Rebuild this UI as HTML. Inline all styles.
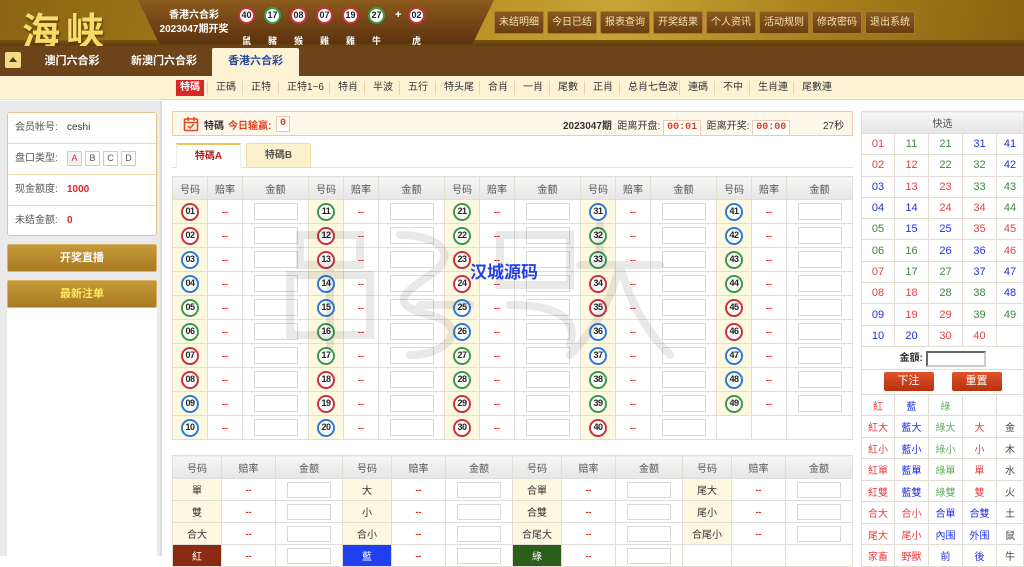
<!DOCTYPE html>
<html><head><meta charset="utf-8"><style>
*{box-sizing:border-box;margin:0;padding:0}
body{width:1024px;height:556px;overflow:hidden;font-family:"Liberation Sans","Noto Sans CJK SC",sans-serif;font-size:11px;color:#333;background:#fff;position:relative}
.abs{position:absolute}
#hd{left:0;top:0;width:1024px;height:46px;background:linear-gradient(100deg,#8a6412 0%,#b48a22 40%,#c9a336 60%,#a97f1c 80%,#8a6210 100%)}
#hd:after{content:"";position:absolute;left:0;right:0;bottom:0;height:6px;background:linear-gradient(#7a5410,#5e3e0e)}
#logo{left:22px;top:1px;font-size:38px;font-weight:bold;color:#f7dc6a;letter-spacing:6px;text-shadow:1px 2px 2px #5a3a08;font-family:"Noto Sans CJK SC",sans-serif}
#trap{left:138px;top:0;width:356px;height:44px;background:linear-gradient(#8c5a1c,#5c3210);clip-path:polygon(0 0,100% 0,94% 100%,6% 100%);}
.info{color:#fff;font-size:10px;font-weight:bold;text-align:center;line-height:14px}
.hb{display:inline-block;width:17px;height:17px;border-radius:50%;background:#fff;color:#222;font-size:9px;font-weight:bold;text-align:center;line-height:13px;border:2px solid}
.zod{color:#fff;font-size:9px;font-weight:bold;position:absolute;top:27px;width:17px;text-align:center}
#btns{left:494px;top:11px;display:flex;gap:3px}
#btns span{display:block;width:50px;text-align:center;height:23px;line-height:21px;background:linear-gradient(#8a5a1e,#6a3e12);border:1px solid #a87a32;border-radius:2px;color:#f4e2b4;font-size:10px}
#tabs{left:0;top:46px;width:1024px;height:30px;background:#6d4419}
#up{left:5px;top:52px;width:16px;height:16px;background:#f3d98a;border-radius:2px}
#up:after{content:"";position:absolute;left:4px;top:5px;border-left:4px solid transparent;border-right:4px solid transparent;border-bottom:5px solid #5a3a10}
.tab{top:46px;height:30px;line-height:30px;color:#fff;font-size:11px;font-weight:bold;text-align:center}
#sub{left:0;top:76px;width:1024px;height:24px;background:#fdf3d4;border-bottom:1px solid #e8dcb8}
.sn{position:absolute;top:81px;font-size:10px;color:#333;line-height:14px}
.sep{position:absolute;top:81px;width:1px;height:14px;background:#e0d4b4}
#left{left:0;top:101px;width:162px;height:455px;background:#eaeaea;border-right:2px solid #ddd}
#acc{left:7px;top:112px;width:150px;height:124px;background:#fff;border:1px solid #e6c98a;border-radius:3px}
.ar{position:absolute;left:0;width:148px;height:31px;border-bottom:1px solid #ecd9b0;line-height:30px;font-size:10px;color:#555;padding-left:7px}
.ar b{color:#d22;position:absolute;left:59px}
.pk{display:inline-block;width:15px;height:15px;border:1px solid #ccc;line-height:13px;text-align:center;font-size:9px;margin-right:3px;background:#fff}
.gbtn{left:7px;width:150px;height:28px;background:linear-gradient(#c59a38,#a87a22);border:1px solid #d8b466;border-radius:2px;color:#fff;font-weight:bold;text-align:center;line-height:26px;font-size:11px}
#bar{left:172px;top:111px;width:681px;height:25px;background:#fdf8ea;border:1px solid #e8cf9c}
.tm{display:inline-block;border:1px solid #f0c8b0;background:#fff;color:#d8401a;font-weight:bold;padding:0 3px;line-height:14px;font-family:"Liberation Mono",monospace;font-size:10px}
.ttab{top:143px;height:25px;line-height:24px;text-align:center;font-size:10px;font-weight:bold}
table{border-collapse:collapse;position:absolute;table-layout:fixed}
td,th{border:1px solid #e2ded6;text-align:center;font-size:10px;padding:0}
th{background:linear-gradient(#f6f6f6,#e6e6e6);color:#555;font-weight:normal}
td.n{background:#fdf8e0}
td.o{color:#e22;font-weight:bold;font-size:9px}
.in{display:inline-block;width:44px;height:17px;border:1px solid #d8d8d8;vertical-align:middle;background:#fff}
#t1 tr{height:24px}#t1 tr:first-child{height:23px}
#t2 tr{height:22px}#t2 tr:first-child{height:23px}
#t2 .in{width:44px;height:16px}
.b{display:inline-block;width:18px;height:18px;border-radius:50%;background:#fff;border:2.5px solid;font-style:normal;font-weight:bold;font-size:9px;line-height:13px;color:#222;vertical-align:middle;letter-spacing:-.5px}
.r{border-color:#c8323c}.u{border-color:#2f7ad8}.g{border-color:#3a9a4a}
#right{left:861px;top:111px;width:162px}
#q td{height:21.3px;font-size:11px;font-family:"Liberation Sans","Noto Sans CJK SC",sans-serif}
.R{color:#e84040}.U{color:#2030e0}.G{color:#3a8a3a}.K{color:#444}.L{color:#62b060}
#q2 td{height:21.5px;font-size:10px}
.rb{display:inline-block;width:50px;height:19px;line-height:19px;background:linear-gradient(#e0552c,#b8300e);color:#fff;border-radius:2px;font-size:11px}
</style></head><body>
<div id="hd" class="abs"></div>
<div id="logo" class="abs">海峡</div>
<div id="trap" class="abs"></div>
<div class="abs info" style="left:158px;top:9px;width:72px">香港六合彩<br>2023047期开奖</div>
<div class="abs" style="left:238px;top:7px;width:200px;height:36px">
<span class="hb" style="position:absolute;left:0;border-color:#c8323c">40</span>
<span class="hb" style="position:absolute;left:26px;border-color:#3a9a4a">17</span>
<span class="hb" style="position:absolute;left:52px;border-color:#c8323c">08</span>
<span class="hb" style="position:absolute;left:78px;border-color:#c8323c">07</span>
<span class="hb" style="position:absolute;left:104px;border-color:#c8323c">19</span>
<span class="hb" style="position:absolute;left:130px;border-color:#3a9a4a">27</span>
<span style="position:absolute;left:157px;top:2px;color:#fff;font-weight:bold">+</span>
<span class="hb" style="position:absolute;left:170px;border-color:#c8323c">02</span>
<span class="zod" style="left:0">鼠</span><span class="zod" style="left:26px">豬</span><span class="zod" style="left:52px">猴</span><span class="zod" style="left:78px">雞</span><span class="zod" style="left:104px">雞</span><span class="zod" style="left:130px">牛</span><span class="zod" style="left:170px">虎</span>
</div>
<div id="btns" class="abs"><span>未结明细</span><span>今日已结</span><span>报表查询</span><span>开奖结果</span><span>个人资讯</span><span>活动规则</span><span>修改密码</span><span>退出系统</span></div>
<div id="tabs" class="abs"></div>
<div id="up" class="abs"></div>
<div class="abs tab" style="left:40px;width:64px">澳门六合彩</div>
<div class="abs tab" style="left:124px;width:80px">新澳门六合彩</div>
<div class="abs tab" style="left:212px;top:48px;height:28px;line-height:26px;width:87px;background:#fdf3d4;color:#2a4a9a;border-radius:2px 2px 0 0">香港六合彩</div>
<div id="sub" class="abs"></div>
<span class="sn" style="left:176px;top:80px;background:#d8282a;color:#fff;padding:1px 4px;font-weight:bold">特碼</span>
<span class="sep" style="left:207px"></span><span class="sn" style="left:216px">正碼</span>
<span class="sep" style="left:242px"></span><span class="sn" style="left:251px">正特</span>
<span class="sep" style="left:278px"></span><span class="sn" style="left:287px">正特1~6</span>
<span class="sep" style="left:329px"></span><span class="sn" style="left:338px">特肖</span>
<span class="sep" style="left:364px"></span><span class="sn" style="left:373px">半波</span>
<span class="sep" style="left:399px"></span><span class="sn" style="left:408px">五行</span>
<span class="sep" style="left:435px"></span><span class="sn" style="left:444px">特头尾</span>
<span class="sep" style="left:479px"></span><span class="sn" style="left:488px">合肖</span>
<span class="sep" style="left:514px"></span><span class="sn" style="left:523px">一肖</span>
<span class="sep" style="left:549px"></span><span class="sn" style="left:558px">尾數</span>
<span class="sep" style="left:584px"></span><span class="sn" style="left:593px">正肖</span>
<span class="sep" style="left:619px"></span><span class="sn" style="left:628px">总肖七色波</span>
<span class="sep" style="left:679px"></span><span class="sn" style="left:688px">連碼</span>
<span class="sep" style="left:714px"></span><span class="sn" style="left:723px">不中</span>
<span class="sep" style="left:749px"></span><span class="sn" style="left:758px">生肖連</span>
<span class="sep" style="left:793px"></span><span class="sn" style="left:802px">尾數連</span>

<div id="left" class="abs"></div>
<div id="acc" class="abs">
<div class="ar" style="top:0">会员帐号:<span style="position:absolute;left:59px;color:#333">ceshi</span></div>
<div class="ar" style="top:31px">盘口类型:<span style="position:absolute;left:59px;top:0"><span class="pk" style="color:#e22;background:#eef3f8">A</span><span class="pk">B</span><span class="pk">C</span><span class="pk">D</span></span></div>
<div class="ar" style="top:62px">现金额度:<b>1000</b></div>
<div class="ar" style="top:93px;border:none">未结金额:<b>0</b></div>
</div>
<div class="abs gbtn" style="top:244px">开奖直播</div>
<div class="abs gbtn" style="top:280px;color:#ffe860">最新注单</div>
<div class="abs" style="left:7px;top:308px;width:150px;height:248px;background:#fff"></div>

<div id="bar" class="abs">
<svg class="abs" style="left:10px;top:4px" width="16" height="16" viewBox="0 0 16 16"><rect x="1.5" y="3" width="13" height="11.5" rx="1" fill="none" stroke="#e04a20" stroke-width="1.6"/><path d="M1.5 6.5h13M5 1v4M11 1v4" stroke="#e04a20" stroke-width="1.6"/><path d="M5 10l2 2 4-4" fill="none" stroke="#e04a20" stroke-width="1.5"/></svg>
<span class="abs" style="left:31px;top:5px;font-weight:bold;font-size:10px">特碼</span>
<span class="abs" style="left:55px;top:5px;font-weight:bold;color:#e04020;font-size:10px">今日输赢:</span>
<span class="abs tm" style="left:103px;top:4px">0</span>
<span class="abs" style="left:390px;top:5px;font-size:10px"><b>2023047期</b>&nbsp; 距离开盘: <span class="tm">00:01</span>&nbsp; 距离开奖: <span class="tm">00:00</span></span>
<span class="abs" style="left:650px;top:5px;font-size:10px">27秒</span>
</div>
<div class="abs" style="left:172px;top:167px;width:681px;height:1px;background:#e8e0d0"></div>
<div class="abs ttab" style="left:176px;width:65px;background:#fff;border:1px solid #eee;border-top:2px solid #f0c060;border-bottom:none;color:#b02020">特碼A</div>
<div class="abs ttab" style="left:246px;width:65px;background:#fbf1cc;border:1px solid #eedca0;color:#555">特碼B</div>

<div class="abs" style="left:470px;top:258px;font-size:17px;font-weight:bold;color:#2340e0;z-index:3">汉城源码</div>
<svg class="abs" style="left:280px;top:205px;opacity:.1;z-index:2" width="400" height="160"><g fill="none" stroke="#333" stroke-width="8" stroke-linecap="round"><path d="M20 30h60v30H20zM10 70h80v60H10zM50 60v80"/><path d="M120 30c40 0 60 20 30 40s-40 30 0 40 20 40-20 40M140 100h50"/><path d="M220 30h70v50h-70zM230 100c40 0 70 10 60 40"/><path d="M320 20v40M300 60h80M340 60c-10 40-30 70-50 90M340 60c10 40 30 70 50 90"/></g></svg>

<table id="t1" style="left:172px;top:176px;width:681px">
<colgroup><col width="35"><col width="35"><col width="66"><col width="35"><col width="35"><col width="66"><col width="35"><col width="35"><col width="66"><col width="35"><col width="35"><col width="66"><col width="35"><col width="35"><col width="66"></colgroup>
<tr><th>号码</th><th>赔率</th><th>金额</th><th>号码</th><th>赔率</th><th>金额</th><th>号码</th><th>赔率</th><th>金额</th><th>号码</th><th>赔率</th><th>金额</th><th>号码</th><th>赔率</th><th>金额</th></tr>
<tr><td class="n"><i class="b r">01</i></td><td class="o">--</td><td><span class="in"></span></td><td class="n"><i class="b g">11</i></td><td class="o">--</td><td><span class="in"></span></td><td class="n"><i class="b g">21</i></td><td class="o">--</td><td><span class="in"></span></td><td class="n"><i class="b u">31</i></td><td class="o">--</td><td><span class="in"></span></td><td class="n"><i class="b u">41</i></td><td class="o">--</td><td><span class="in"></span></td></tr>
<tr><td class="n"><i class="b r">02</i></td><td class="o">--</td><td><span class="in"></span></td><td class="n"><i class="b r">12</i></td><td class="o">--</td><td><span class="in"></span></td><td class="n"><i class="b g">22</i></td><td class="o">--</td><td><span class="in"></span></td><td class="n"><i class="b g">32</i></td><td class="o">--</td><td><span class="in"></span></td><td class="n"><i class="b u">42</i></td><td class="o">--</td><td><span class="in"></span></td></tr>
<tr><td class="n"><i class="b u">03</i></td><td class="o">--</td><td><span class="in"></span></td><td class="n"><i class="b r">13</i></td><td class="o">--</td><td><span class="in"></span></td><td class="n"><i class="b r">23</i></td><td class="o">--</td><td><span class="in"></span></td><td class="n"><i class="b g">33</i></td><td class="o">--</td><td><span class="in"></span></td><td class="n"><i class="b g">43</i></td><td class="o">--</td><td><span class="in"></span></td></tr>
<tr><td class="n"><i class="b u">04</i></td><td class="o">--</td><td><span class="in"></span></td><td class="n"><i class="b u">14</i></td><td class="o">--</td><td><span class="in"></span></td><td class="n"><i class="b r">24</i></td><td class="o">--</td><td><span class="in"></span></td><td class="n"><i class="b r">34</i></td><td class="o">--</td><td><span class="in"></span></td><td class="n"><i class="b g">44</i></td><td class="o">--</td><td><span class="in"></span></td></tr>
<tr><td class="n"><i class="b g">05</i></td><td class="o">--</td><td><span class="in"></span></td><td class="n"><i class="b u">15</i></td><td class="o">--</td><td><span class="in"></span></td><td class="n"><i class="b u">25</i></td><td class="o">--</td><td><span class="in"></span></td><td class="n"><i class="b r">35</i></td><td class="o">--</td><td><span class="in"></span></td><td class="n"><i class="b r">45</i></td><td class="o">--</td><td><span class="in"></span></td></tr>
<tr><td class="n"><i class="b g">06</i></td><td class="o">--</td><td><span class="in"></span></td><td class="n"><i class="b g">16</i></td><td class="o">--</td><td><span class="in"></span></td><td class="n"><i class="b u">26</i></td><td class="o">--</td><td><span class="in"></span></td><td class="n"><i class="b u">36</i></td><td class="o">--</td><td><span class="in"></span></td><td class="n"><i class="b r">46</i></td><td class="o">--</td><td><span class="in"></span></td></tr>
<tr><td class="n"><i class="b r">07</i></td><td class="o">--</td><td><span class="in"></span></td><td class="n"><i class="b g">17</i></td><td class="o">--</td><td><span class="in"></span></td><td class="n"><i class="b g">27</i></td><td class="o">--</td><td><span class="in"></span></td><td class="n"><i class="b u">37</i></td><td class="o">--</td><td><span class="in"></span></td><td class="n"><i class="b u">47</i></td><td class="o">--</td><td><span class="in"></span></td></tr>
<tr><td class="n"><i class="b r">08</i></td><td class="o">--</td><td><span class="in"></span></td><td class="n"><i class="b r">18</i></td><td class="o">--</td><td><span class="in"></span></td><td class="n"><i class="b g">28</i></td><td class="o">--</td><td><span class="in"></span></td><td class="n"><i class="b g">38</i></td><td class="o">--</td><td><span class="in"></span></td><td class="n"><i class="b u">48</i></td><td class="o">--</td><td><span class="in"></span></td></tr>
<tr><td class="n"><i class="b u">09</i></td><td class="o">--</td><td><span class="in"></span></td><td class="n"><i class="b r">19</i></td><td class="o">--</td><td><span class="in"></span></td><td class="n"><i class="b r">29</i></td><td class="o">--</td><td><span class="in"></span></td><td class="n"><i class="b g">39</i></td><td class="o">--</td><td><span class="in"></span></td><td class="n"><i class="b g">49</i></td><td class="o">--</td><td><span class="in"></span></td></tr>
<tr><td class="n"><i class="b u">10</i></td><td class="o">--</td><td><span class="in"></span></td><td class="n"><i class="b u">20</i></td><td class="o">--</td><td><span class="in"></span></td><td class="n"><i class="b r">30</i></td><td class="o">--</td><td><span class="in"></span></td><td class="n"><i class="b r">40</i></td><td class="o">--</td><td><span class="in"></span></td><td></td><td></td><td></td></tr>
</table>

<table id="t2" style="left:172px;top:455px;width:681px">
<colgroup><col width="49"><col width="54"><col width="67"><col width="49"><col width="54"><col width="67"><col width="49"><col width="54"><col width="67"><col width="49"><col width="54"><col width="67"></colgroup>
<tr><th>号码</th><th>赔率</th><th>金额</th><th>号码</th><th>赔率</th><th>金额</th><th>号码</th><th>赔率</th><th>金额</th><th>号码</th><th>赔率</th><th>金额</th></tr>
<tr><td class="n">單</td><td class="o">--</td><td><span class="in"></span></td><td class="n">大</td><td class="o">--</td><td><span class="in"></span></td><td class="n">合單</td><td class="o">--</td><td><span class="in"></span></td><td class="n">尾大</td><td class="o">--</td><td><span class="in"></span></td></tr>
<tr><td class="n">雙</td><td class="o">--</td><td><span class="in"></span></td><td class="n">小</td><td class="o">--</td><td><span class="in"></span></td><td class="n">合雙</td><td class="o">--</td><td><span class="in"></span></td><td class="n">尾小</td><td class="o">--</td><td><span class="in"></span></td></tr>
<tr><td class="n">合大</td><td class="o">--</td><td><span class="in"></span></td><td class="n">合小</td><td class="o">--</td><td><span class="in"></span></td><td class="n">合尾大</td><td class="o">--</td><td><span class="in"></span></td><td class="n">合尾小</td><td class="o">--</td><td><span class="in"></span></td></tr>
<tr><td style="background:#8b2a12;color:#fff">紅</td><td class="o">--</td><td><span class="in"></span></td><td style="background:#1e40f0;color:#fff">藍</td><td class="o">--</td><td><span class="in"></span></td><td style="background:#2a5e1a;color:#fff">綠</td><td class="o">--</td><td><span class="in"></span></td><td></td><td></td><td></td></tr>
</table>

<div id="right" class="abs">
<table id="q" style="position:static;width:162px">
<colgroup><col width="33"><col width="34"><col width="34"><col width="34"><col width="27"></colgroup>
<tr><th colspan="5" style="height:22px;font-size:10px">快选</th></tr>
<tr><td class="R">01</td><td class="G">11</td><td class="G">21</td><td class="U">31</td><td class="U">41</td></tr>
<tr><td class="R">02</td><td class="R">12</td><td class="G">22</td><td class="G">32</td><td class="U">42</td></tr>
<tr><td class="U">03</td><td class="R">13</td><td class="R">23</td><td class="G">33</td><td class="G">43</td></tr>
<tr><td class="U">04</td><td class="U">14</td><td class="R">24</td><td class="R">34</td><td class="G">44</td></tr>
<tr><td class="G">05</td><td class="U">15</td><td class="U">25</td><td class="R">35</td><td class="R">45</td></tr>
<tr><td class="G">06</td><td class="G">16</td><td class="U">26</td><td class="U">36</td><td class="R">46</td></tr>
<tr><td class="R">07</td><td class="G">17</td><td class="G">27</td><td class="U">37</td><td class="U">47</td></tr>
<tr><td class="R">08</td><td class="R">18</td><td class="G">28</td><td class="G">38</td><td class="U">48</td></tr>
<tr><td class="U">09</td><td class="R">19</td><td class="R">29</td><td class="G">39</td><td class="G">49</td></tr>
<tr><td class="U">10</td><td class="U">20</td><td class="R">30</td><td class="R">40</td><td></td></tr>
<tr><td colspan="5" style="height:23px;font-weight:bold;font-size:10px">金額: <span style="display:inline-block;width:60px;height:16px;border:2px solid #666;vertical-align:middle;border-right-color:#ccc;border-bottom-color:#ccc"></span></td></tr>
<tr><td colspan="5" style="height:25px"><span class="rb" style="margin-right:18px">下注</span><span class="rb">重置</span></td></tr>
</table>
<table id="q2" style="position:static;width:162px;margin-top:-1px">
<colgroup><col width="33"><col width="34"><col width="34"><col width="34"><col width="27"></colgroup>
<tr><td class="R">紅</td><td class="U">藍</td><td class="L">綠</td><td></td><td></td></tr>
<tr><td class="R">紅大</td><td class="U">藍大</td><td class="L">綠大</td><td class="R">大</td><td class="K">金</td></tr>
<tr><td class="R">紅小</td><td class="U">藍小</td><td class="L">綠小</td><td class="R">小</td><td class="K">木</td></tr>
<tr><td class="R">紅單</td><td class="U">藍單</td><td class="L">綠單</td><td class="R">單</td><td class="K">水</td></tr>
<tr><td class="R">紅雙</td><td class="U">藍雙</td><td class="L">綠雙</td><td class="R">雙</td><td class="K">火</td></tr>
<tr><td class="R">合大</td><td class="R">合小</td><td class="U">合單</td><td class="U">合雙</td><td class="K">土</td></tr>
<tr><td class="R">尾大</td><td class="R">尾小</td><td class="U">內围</td><td class="U">外围</td><td class="K">鼠</td></tr>
<tr><td class="R">家畜</td><td class="R">野獸</td><td class="U">前</td><td class="U">後</td><td class="K">牛</td></tr>
</table>
</div>
</body></html>
